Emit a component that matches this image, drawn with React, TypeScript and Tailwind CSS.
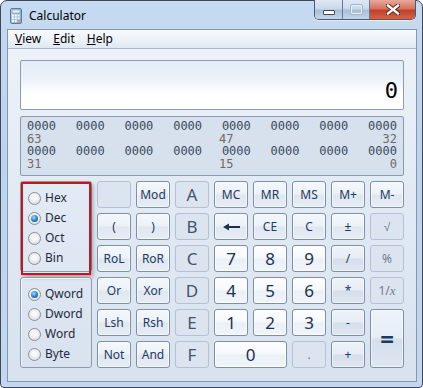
import React from "react";

type Variant = "num" | "fn" | "op" | "hex" | "off";

const ui = "font-['Noto_Sans',sans-serif]";
const mono = "font-['DejaVu_Sans_Mono',monospace]";

const variantClass: Record<Variant, string> = {
    num: "border-[#7d8fa6] bg-[linear-gradient(180deg,#fdfeff_0%,#f5f8fc_48%,#eaf0f7_52%,#f1f5fa_100%)] text-[#1c2f4d] text-[17px] shadow-[inset_0_0_0_1px_rgba(255,255,255,0.7)]",
    fn: "border-[#7d8fa6] bg-[linear-gradient(180deg,#f4f8fc_0%,#ecf1f8_48%,#dfe7f1_52%,#e6edf5_100%)] text-[#1e3a5f] text-[12px] shadow-[inset_0_0_0_1px_rgba(255,255,255,0.6)]",
    op: "border-[#7d8fa6] bg-[linear-gradient(180deg,#eef3f9_0%,#e6edf5_48%,#d6e0ec_52%,#dde6f0_100%)] text-[#1e3a5f] text-[12px] shadow-[inset_0_0_0_1px_rgba(255,255,255,0.55)]",
    hex: "border-[#b3c1d2] bg-[#dce5ef] text-[#44546b] text-[17px]",
    off: "border-[#b3c1d2] bg-[#dce5ef] text-[#6d7b8f] text-[12px]",
};

function Btn({label, variant = "fn", className = ""}: {label: React.ReactNode; variant?: Variant; className?: string}) {
    return (
        <div className={`flex items-center justify-center rounded-[3px] border leading-none ${ui} ${variantClass[variant]} ${className}`}>
            {label}
        </div>
    );
}

function Radio({label, checked}: {label: string; checked?: boolean}) {
    return (
        <div className="flex items-center gap-[4px] h-[20px]">
            <span className="flex items-center justify-center w-[13px] h-[13px] rounded-full border border-[#8c8f94] bg-[radial-gradient(circle_at_50%_40%,#ffffff_0%,#eef0f2_45%,#cfd3d8_100%)]">
                {checked && (
                    <span className="w-[7px] h-[7px] rounded-full bg-[radial-gradient(circle_at_40%_35%,#9ad8ff_0%,#2a7cc4_55%,#0d3f74_100%)]" />
                )}
            </span>
            <span className={`text-[12px] text-[#1f2a3a] ${ui}`}>{label}</span>
        </div>
    );
}

function GroupBox({items, checked, className = ""}: {items: string[]; checked: string; className?: string}) {
    return (
        <div className={`relative flex flex-col pt-[6px] pl-[7px] rounded-[3px] border border-[#8b9bb0] shadow-[inset_1px_1px_0_rgba(255,255,255,0.7)] ${className}`}>
            {items.map((it) => (
                <Radio key={it} label={it} checked={it === checked} />
            ))}
        </div>
    );
}

function CalcIcon() {
    return (
        <svg width="12" height="16" viewBox="0 0 12 16">
            <defs>
                <linearGradient id="cb" x1="0" y1="0" x2="1" y2="1">
                    <stop offset="0" stopColor="#c9dcef" />
                    <stop offset="1" stopColor="#7fa3c6" />
                </linearGradient>
            </defs>
            <rect x="0.5" y="0.5" width="11" height="15" rx="1.5" fill="url(#cb)" stroke="#5a7b9c" />
            <rect x="2" y="2" width="8" height="3" fill="#e9f3fb" stroke="#6a8aaa" strokeWidth="0.6" />
            {[0, 1, 2].map((r) =>
                [0, 1, 2].map((c) => (
                    <rect key={`${r}-${c}`} x={2 + c * 2.8} y={6.5 + r * 2.8} width="2" height="2" fill={c === 2 && r === 2 ? "#f2a24a" : "#f4f8fc"} />
                ))
            )}
        </svg>
    );
}

function CaptionButtons() {
    return (
        <div className="flex -mt-px h-[20px] rounded-b-[5px] border border-t-0 border-[#4c5a6b] overflow-hidden shadow-[0_1px_0_rgba(255,255,255,0.5)]">
            <div className="flex items-center justify-center w-[28px] bg-[linear-gradient(180deg,#dfe9f5_0%,#c9d9ec_45%,#a9bed8_55%,#c3d6ec_100%)] border-r border-[#6b7b8f]">
                <span className="mt-[5px] w-[12px] h-[5px] bg-white border border-[#3b4a5c] rounded-[1px]" />
            </div>
            <div className="flex items-center justify-center w-[27px] bg-[linear-gradient(180deg,#dfe9f5_0%,#c9d9ec_45%,#a9bed8_55%,#c3d6ec_100%)] border-r border-[#6b7b8f]">
                <span className="w-[11px] h-[9px] border-[1.5px] border-[#e8eff7] outline outline-1 outline-[#a5b5c8] rounded-[1px]" />
            </div>
            <div className="flex items-center justify-center w-[45px] bg-[linear-gradient(180deg,#e9a99c_0%,#d5735f_45%,#c2412b_55%,#d2634c_100%)]">
                <svg width="14" height="11" viewBox="0 0 14 11">
                    <path d="M2 1.5 L12 9.5 M12 1.5 L2 9.5" stroke="#4b1d16" strokeWidth="4.2" strokeLinecap="square" />
                    <path d="M2 1.5 L12 9.5 M12 1.5 L2 9.5" stroke="#ffffff" strokeWidth="2.4" strokeLinecap="square" />
                </svg>
            </div>
        </div>
    );
}

function BackArrow() {
    return (
        <svg width="17" height="8" viewBox="0 0 17 8">
            <path d="M0 4 L6 0.5 L6 3 L17 3 L17 5 L6 5 L6 7.5 Z" fill="#1c2f4d" />
        </svg>
    );
}

const bitRows: [string, string, string][] = [
    ["63", "47", "32"],
    ["31", "15", "0"],
];

export default function App() {
    return (
        <div className="w-[423px] h-[388px] bg-white">
            <div className="flex flex-col w-[423px] h-[388px] rounded-t-[7px] rounded-b-[4px] border border-[#3e4856] bg-[linear-gradient(180deg,#c6daf1_0%,#bcd3ee_40%,#c3d8f0_100%)]">
                {/* title bar */}
                <div className="flex items-start justify-between h-[28px] pl-[9px] pr-[6px]">
                    <div className="flex items-center gap-[7px] pt-[6px]">
                        <CalcIcon />
                        <span className={`text-[12px] text-black ${ui}`}>Calculator</span>
                    </div>
                    <CaptionButtons />
                </div>

                {/* client */}
                <div className="flex flex-col mx-[6px] mr-[5px] border border-[#8797ab] bg-[linear-gradient(180deg,#eef3fa_0%,#e3ebf5_40%,#d8e2ee_100%)]">
                    <div className={`flex items-center gap-[12px] h-[19px] pl-[7px] border-b border-[#a9b7c9] bg-[linear-gradient(180deg,#f8fafd_0%,#eef3f9_50%,#dfe7f2_100%)] text-[12px] text-black ${ui}`}>
                        <span><span className="underline">V</span>iew</span>
                        <span><span className="underline">E</span>dit</span>
                        <span><span className="underline">H</span>elp</span>
                    </div>

                    <div className="flex flex-col px-[12px] pt-[11px] pb-[13px]">
                        <div className="flex items-center justify-end h-[50px] pr-[5px] pt-[10px] rounded-[2px] border border-[#8c9bb0] bg-[linear-gradient(180deg,#e3ecf7_0%,#e9f0f9_30%,#ffffff_70%,#ffffff_100%)]">
                            <span className={`text-[22px] text-black ${mono}`}>0</span>
                        </div>

                        <div className={`mt-[6px] flex flex-col h-[60px] px-[6px] pt-[3px] rounded-[2px] border border-[#8c9bb0] bg-[#d7e1ed] text-[12px] leading-[12.6px] ${mono}`}>
                            {bitRows.map((labels, i) => (
                                <div key={i} className="flex flex-col">
                                    <div className="flex justify-between text-[#3a4a60]">
                                        {Array.from({length: 8}).map((_, j) => (
                                            <span key={j}>0000</span>
                                        ))}
                                    </div>
                                    <div className="grid grid-cols-[192px_1fr_auto] text-[#6e6a66]">
                                        <span>{labels[0]}</span>
                                        <span>{labels[1]}</span>
                                        <span>{labels[2]}</span>
                                    </div>
                                </div>
                            ))}
                        </div>

                        <div className="mt-[5px] grid grid-cols-[72px_repeat(8,34px)] grid-rows-[repeat(6,27px)] gap-[5px]">
                            <div className="relative col-start-1 row-start-1 row-span-3">
                                <GroupBox className="h-full" items={["Hex", "Dec", "Oct", "Bin"]} checked="Dec" />
                                <div className="absolute left-[1px] top-[1px] w-[70px] h-[93px] border-2 border-[#c4161c] shadow-[2px_2px_4px_rgba(0,0,0,0.3)]" />
                            </div>
                            <GroupBox className="col-start-1 row-start-4 row-span-3" items={["Qword", "Dword", "Word", "Byte"]} checked="Qword" />

                            <Btn label="" variant="off" />
                            <Btn label="Mod" />
                            <Btn label="A" variant="hex" />
                            <Btn label="MC" />
                            <Btn label="MR" />
                            <Btn label="MS" />
                            <Btn label="M+" />
                            <Btn label="M-" />

                            <Btn label="(" />
                            <Btn label=")" />
                            <Btn label="B" variant="hex" />
                            <Btn label={<BackArrow />} />
                            <Btn label="CE" />
                            <Btn label="C" />
                            <Btn label="±" />
                            <Btn label="√" variant="off" />

                            <Btn label="RoL" />
                            <Btn label="RoR" />
                            <Btn label="C" variant="hex" />
                            <Btn label="7" variant="num" />
                            <Btn label="8" variant="num" />
                            <Btn label="9" variant="num" />
                            <Btn label="/" variant="op" />
                            <Btn label="%" variant="off" />

                            <Btn label="Or" />
                            <Btn label="Xor" />
                            <Btn label="D" variant="hex" />
                            <Btn label="4" variant="num" />
                            <Btn label="5" variant="num" />
                            <Btn label="6" variant="num" />
                            <Btn label="*" variant="op" />
                            <Btn label={<span>1/<i className="font-['Liberation_Serif',serif] text-[13px]">x</i></span>} variant="off" />

                            <Btn label="Lsh" />
                            <Btn label="Rsh" />
                            <Btn label="E" variant="hex" />
                            <Btn label="1" variant="num" />
                            <Btn label="2" variant="num" />
                            <Btn label="3" variant="num" />
                            <Btn label="-" variant="op" />
                            <Btn label={<span className="text-[24px] font-bold">=</span>} variant="op" className="col-start-9 row-start-5 row-span-2" />

                            <Btn label="Not" />
                            <Btn label="And" />
                            <Btn label="F" variant="hex" />
                            <Btn label="0" variant="num" className="col-span-2" />
                            <Btn label="." variant="off" />
                            <Btn label="+" variant="op" />
                        </div>
                    </div>
                </div>
            </div>
        </div>
    );
}
